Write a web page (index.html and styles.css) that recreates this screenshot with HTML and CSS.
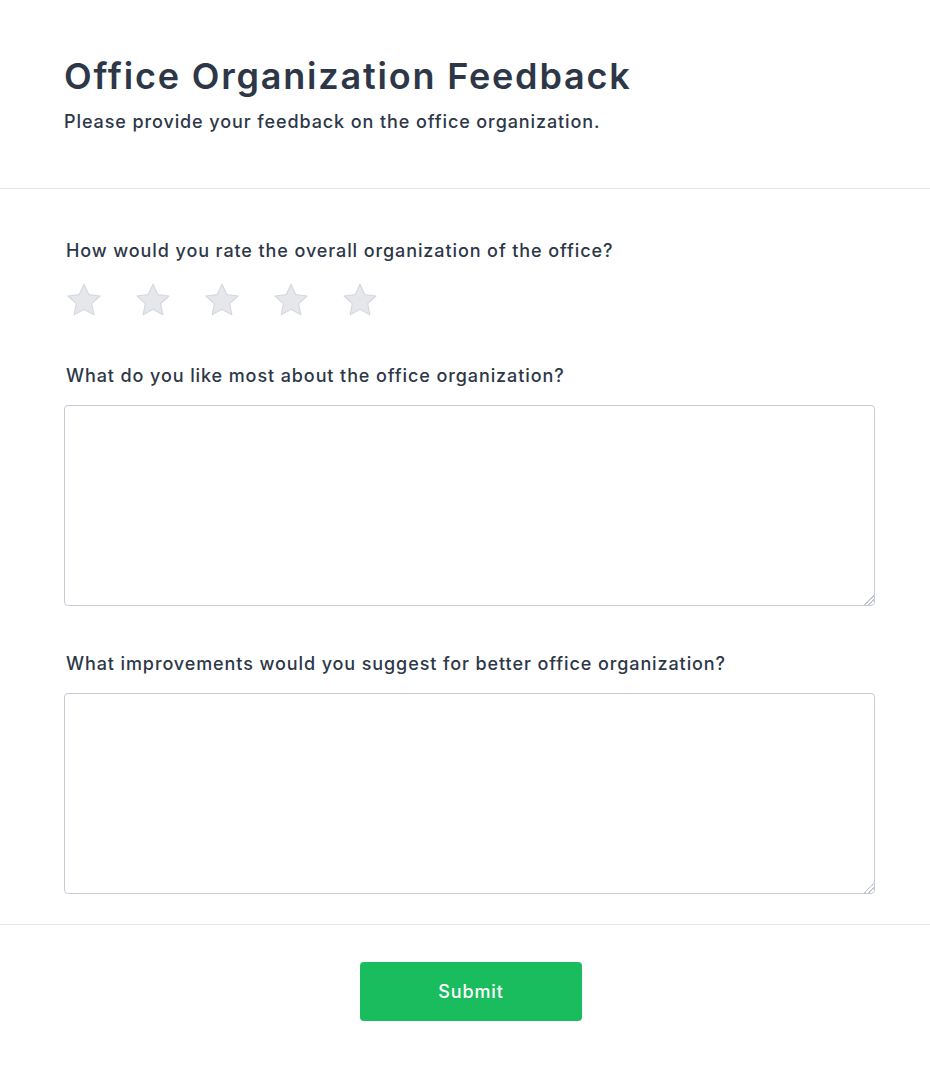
FILE: index.html
```html
<!DOCTYPE html>
<html lang="en">
<head>
<meta charset="utf-8">
<title>Office Organization Feedback</title>
<link rel="stylesheet" href="styles.css">
</head>
<body>
<div class="page">
  <header class="header">
    <h1 class="title">Office Organization Feedback</h1>
    <p class="subtitle">Please provide your feedback on the office organization.</p>
  </header>
  <main class="body">
    <div class="field">
      <label class="label">How would you rate the overall organization of the office?</label>
      <div class="stars">
        <svg class="star" viewBox="0 0 24 24"><path d="M12 2.6l2.9 6.2 6.7.8-5 4.6 1.3 6.7L12 17.6l-5.9 3.3 1.3-6.7-5-4.6 6.7-.8z"/></svg>
        <svg class="star" viewBox="0 0 24 24"><path d="M12 2.6l2.9 6.2 6.7.8-5 4.6 1.3 6.7L12 17.6l-5.9 3.3 1.3-6.7-5-4.6 6.7-.8z"/></svg>
        <svg class="star" viewBox="0 0 24 24"><path d="M12 2.6l2.9 6.2 6.7.8-5 4.6 1.3 6.7L12 17.6l-5.9 3.3 1.3-6.7-5-4.6 6.7-.8z"/></svg>
        <svg class="star" viewBox="0 0 24 24"><path d="M12 2.6l2.9 6.2 6.7.8-5 4.6 1.3 6.7L12 17.6l-5.9 3.3 1.3-6.7-5-4.6 6.7-.8z"/></svg>
        <svg class="star" viewBox="0 0 24 24"><path d="M12 2.6l2.9 6.2 6.7.8-5 4.6 1.3 6.7L12 17.6l-5.9 3.3 1.3-6.7-5-4.6 6.7-.8z"/></svg>
      </div>
    </div>
    <div class="field">
      <label class="label">What do you like most about the office organization?</label>
      <textarea class="textarea"></textarea>
    </div>
    <div class="field">
      <label class="label">What improvements would you suggest for better office organization?</label>
      <textarea class="textarea"></textarea>
    </div>
  </main>
  <footer class="footer">
    <button class="submit" type="button">Submit</button>
  </footer>
</div>
</body>
</html>
```
FILE: styles.css
```css
* { box-sizing: border-box; }
html, body { margin: 0; padding: 0; background: #fff; }
body {
  font-family: Inter, "Noto Sans", sans-serif;
  color: #2d3748;
}
.page { width: 930px; }
.header {
  padding: 52px 64px 52px 64px;
  border-bottom: 1px solid #e2e4ee;
}
.title {
  margin: 0;
  font-size: 36px;
  line-height: 48px;
  font-weight: 600;
  letter-spacing: 0.05em;
  color: #2d3748;
}
.subtitle {
  margin: 8px 0 0;
  font-size: 18px;
  line-height: 28px;
  font-weight: 500;
  letter-spacing: 0.05em;
  color: #2d3748;
}
.body {
  padding: 48px 55px 30px 64px;
  border-bottom: 1px solid #e8e9f0;
  display: flex;
  flex-direction: column;
  gap: 44px;
}
.field { display: flex; flex-direction: column; }
.label {
  display: block;
  padding-left: 2px;
  font-size: 18px;
  line-height: 28px;
  font-weight: 500;
  letter-spacing: 0.05em;
  color: #2d3748;
  margin-bottom: 15px;
}
.stars {
  display: flex;
  align-items: flex-start;
  gap: 29px;
  height: 38px;
  overflow: visible;
}
.star {
  flex: none;
  width: 40px;
  height: 40px;
  fill: #e5e7eb;
  stroke: #d5d8e2;
  stroke-width: 0.7;
  stroke-linejoin: round;
}
.textarea {
  display: block;
  width: 100%;
  height: 201px;
  border: 1px solid #c6cad6;
  border-radius: 4px;
  resize: vertical;
  font-family: inherit;
  font-size: 16px;
  padding: 8px;
  background: #fff;
}
.textarea::-webkit-resizer {
  background: linear-gradient(135deg, transparent 64%, #c3c7d1 64%, #c3c7d1 70%, transparent 70%, transparent 78%, #c3c7d1 78%, #c3c7d1 84%, transparent 84%);
}
.footer {
  display: flex;
  justify-content: center;
  padding: 37px 0 50px;
}
.submit {
  width: 222px;
  height: 59px;
  margin-left: 12px;
  border: none;
  border-radius: 4px;
  background: #1abd5e;
  color: #fff;
  font-family: inherit;
  font-size: 18px;
  font-weight: 500;
  letter-spacing: 0.05em;
}
```
